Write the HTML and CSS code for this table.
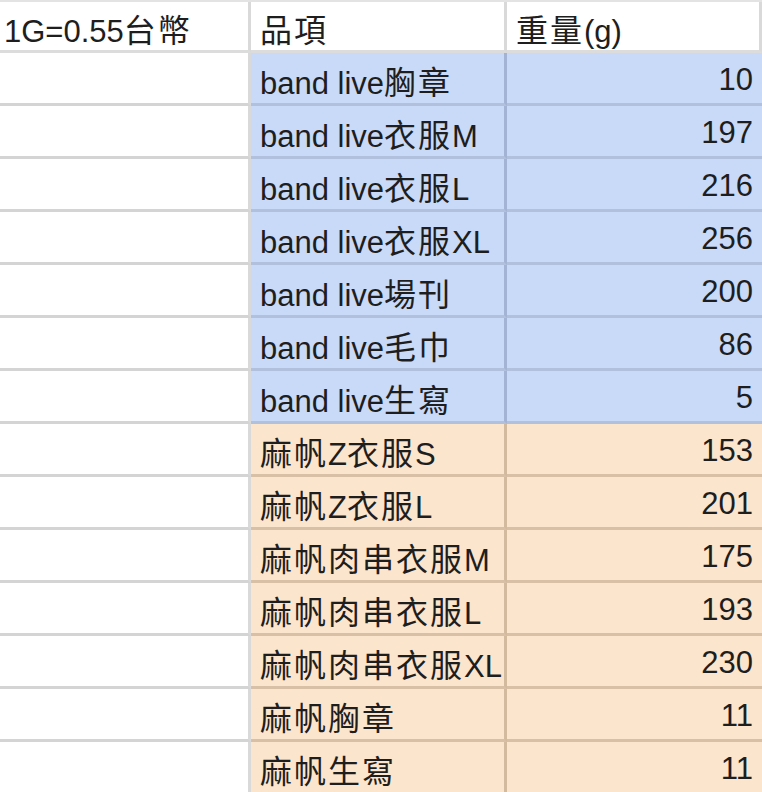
FILE: index.html
```html
<!DOCTYPE html>
<html lang="zh-Hant">
<head>
<meta charset="utf-8">
<title>重量表</title>
<link rel="stylesheet" href="styles.css">
</head>
<body>
<div class="sheet">
  <div class="cell note head">1G=0.55<span class="cjk">台幣</span></div>
  <div class="cell head"><span class="cjk">品項</span></div>
  <div class="cell head"><span class="cjk">重量</span>(g)</div>

  <div class="cell note"></div><div class="cell name blue">band live<span class="cjk">胸章</span></div><div class="cell num blue">10</div>
  <div class="cell note"></div><div class="cell name blue">band live<span class="cjk">衣服</span>M</div><div class="cell num blue">197</div>
  <div class="cell note"></div><div class="cell name blue">band live<span class="cjk">衣服</span>L</div><div class="cell num blue">216</div>
  <div class="cell note"></div><div class="cell name blue">band live<span class="cjk">衣服</span>XL</div><div class="cell num blue">256</div>
  <div class="cell note"></div><div class="cell name blue">band live<span class="cjk">場刊</span></div><div class="cell num blue">200</div>
  <div class="cell note"></div><div class="cell name blue">band live<span class="cjk">毛巾</span></div><div class="cell num blue">86</div>
  <div class="cell note"></div><div class="cell name blue">band live<span class="cjk">生寫</span></div><div class="cell num blue">5</div>

  <div class="cell note"></div><div class="cell name peach"><span class="cjk">麻帆</span>Z<span class="cjk">衣服</span>S</div><div class="cell num peach">153</div>
  <div class="cell note"></div><div class="cell name peach"><span class="cjk">麻帆</span>Z<span class="cjk">衣服</span>L</div><div class="cell num peach">201</div>
  <div class="cell note"></div><div class="cell name peach"><span class="cjk">麻帆肉串衣服</span>M</div><div class="cell num peach">175</div>
  <div class="cell note"></div><div class="cell name peach"><span class="cjk">麻帆肉串衣服</span>L</div><div class="cell num peach">193</div>
  <div class="cell note"></div><div class="cell name peach"><span class="cjk">麻帆肉串衣服</span>XL</div><div class="cell num peach">230</div>
  <div class="cell note"></div><div class="cell name peach"><span class="cjk">麻帆胸章</span></div><div class="cell num peach">11</div>
  <div class="cell note"></div><div class="cell name peach"><span class="cjk">麻帆生寫</span></div><div class="cell num peach">11</div>
</div>
</body>
</html>
```

FILE: styles.css
```css
* { box-sizing: border-box; }

html, body {
  margin: 0;
  padding: 0;
  background: #ffffff;
}

body {
  width: 762px;
  height: 792px;
  overflow: hidden;
  font-family: "Liberation Sans", Arial, "Noto Sans CJK TC", sans-serif;
  font-size: 31px;
  color: #1e1e1e;
}

.sheet {
  display: grid;
  grid-template-columns: 251px 256px 1fr;
  grid-template-rows: 51px;
  grid-auto-rows: 53px;
  border-top: 2px solid #e3e3e3;
}

.cell {
  line-height: 54px;
  height: 53px;
  white-space: nowrap;
  overflow: hidden;
  border-bottom: 3px solid #d4d4d4;
  border-right: 3px solid #d9d9d9;
  padding: 0 9px;
}

.cell.head {
  height: 51px;
  line-height: 52px;
  background: #ffffff;
  border-bottom-color: #dcdcdc;
}

.note {
  padding-left: 4px;
  background: #ffffff;
}

.cjk {
  font-family: "Noto Sans CJK TC", "Noto Sans CJK SC", sans-serif;
  font-size: 32px;
  letter-spacing: 2px;
}

.num {
  text-align: right;
  border-right: none;
  padding-right: 9px;
}

.blue {
  background: #c9daf8;
  border-bottom-color: #b0c0dd;
  border-right-color: #a2b3d3;
}

.peach {
  background: #fce5cd;
  border-bottom-color: #d8c0a6;
  border-right-color: #d2ba9f;
}
```
